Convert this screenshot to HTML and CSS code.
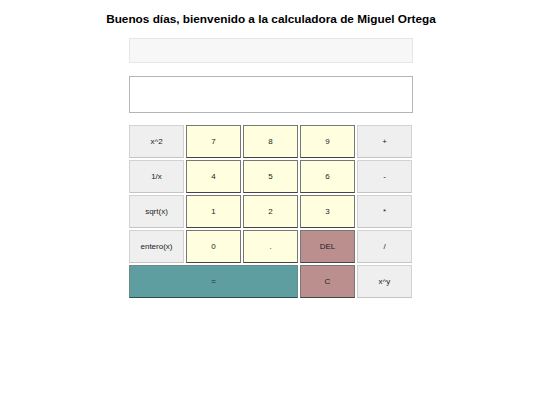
FILE: index.html
```html
<!DOCTYPE html>
<html lang="es">
<head>
    <meta charset="UTF-8">
    <meta name="viewport" content="width=device-width, initial-scale=1.0">
    <title>Calculadora</title>
    <link rel="stylesheet" href="styles.css">
</head>
<body>
    <h1 class="title">Buenos días, bienvenido a la calculadora de Miguel Ortega</h1>

    <div class="calculator">
        <div class="history"></div>
        <div class="display"></div>

        <div class="keys">
            <button class="key fn">x^2</button>
            <button class="key num">7</button>
            <button class="key num">8</button>
            <button class="key num">9</button>
            <button class="key fn">+</button>

            <button class="key fn">1/x</button>
            <button class="key num">4</button>
            <button class="key num">5</button>
            <button class="key num">6</button>
            <button class="key fn">-</button>

            <button class="key fn">sqrt(x)</button>
            <button class="key num">1</button>
            <button class="key num">2</button>
            <button class="key num">3</button>
            <button class="key fn">*</button>

            <button class="key fn">entero(x)</button>
            <button class="key num">0</button>
            <button class="key num">.</button>
            <button class="key del">DEL</button>
            <button class="key fn">/</button>

            <button class="key equal">=</button>
            <button class="key del">C</button>
            <button class="key fn">x^y</button>
        </div>
    </div>
</body>
</html>
```

FILE: styles.css
```css
body {
    margin: 0;
    padding-left: 2px;
    font-family: 'Liberation Sans', Arial, sans-serif;
    background-color: #ffffff;
}

.title {
    margin: 12px 0 0 0;
    font-size: 11.8px;
    font-weight: bold;
    text-align: center;
    color: #000;
}

.calculator {
    width: 284px;
    margin: 12px auto 0 auto;
}

.history {
    height: 23px;
    background-color: #f7f7f7;
    border: 1px solid #e6e6e6;
}

.display {
    height: 35px;
    margin-top: 13px;
    background-color: #fff;
    border: 1px solid #b5b5b5;
}

.keys {
    display: grid;
    grid-template-columns: repeat(5, 55px);
    grid-auto-rows: 33px;
    gap: 2px;
    margin-top: 12px;
}

.key {
    font-family: 'Liberation Sans', Arial, sans-serif;
    font-size: 8px;
    color: #222;
    padding: 0;
    cursor: pointer;
}

.fn {
    background-color: #efefef;
    border: 1px solid #d2d2d2;
    border-bottom-color: #c4c4c4;
}

.num {
    background-color: #ffffe0;
    border: 1px solid #777;
    border-bottom-color: #444;
}

.del {
    background-color: #bc8f8f;
    border: 1px solid #777;
    border-bottom-color: #444;
}

.equal {
    grid-column: span 3;
    background-color: #5f9ea0;
    border: 1px solid #6c8a8a;
    border-bottom-color: #2f4f4f;
}
```
